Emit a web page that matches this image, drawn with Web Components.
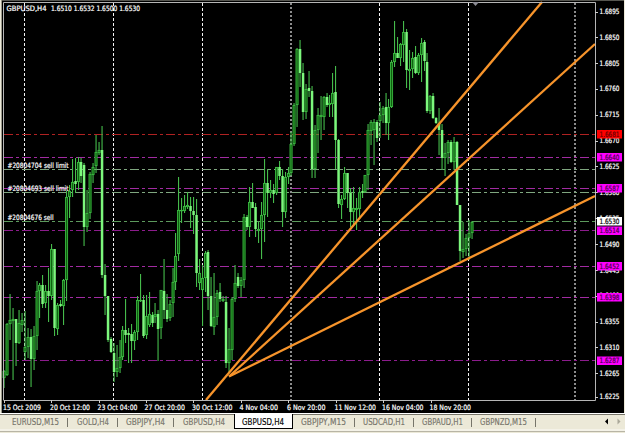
<!DOCTYPE html>
<html lang="en">
<head>
<meta charset="utf-8">
<title>GBPUSD,H4</title>
<style>
  html, body { margin: 0; height: 100%; overflow: hidden; background: #ece9d8; }
</style>
</head>
<body>
<chart-window>
  <price-chart symbol="GBPUSD,H4" quote="1.6510 1.6532 1.6500 1.6530"></price-chart>
  <tab-bar slot="tabs">
    <chart-tab start="12" width="47">EURUSD,M15</chart-tab>
    <chart-tab start="77" width="32">GOLD,H4</chart-tab>
    <chart-tab start="126" width="39">GBPJPY,H4</chart-tab>
    <chart-tab start="183" width="42" last>GBPUSD,H4</chart-tab>
    <chart-tab start="242" width="42" active>GBPUSD,H4</chart-tab>
    <chart-tab start="301" width="45">GBPJPY,M15</chart-tab>
    <chart-tab start="363" width="42">USDCAD,H1</chart-tab>
    <chart-tab start="422" width="41">GBPAUD,H1</chart-tab>
    <chart-tab start="480" width="47">GBPNZD,M15</chart-tab>
  </tab-bar>
</chart-window>

<script>
class ChartWindow extends HTMLElement {
  connectedCallback() {
    this.attachShadow({ mode: 'open' });
    this.shadowRoot.innerHTML = `
      <style>
        :host {
          display: flex;
          flex-direction: column;
          width: 625px;
          height: 433px;
          background: #ece9d8;
        }
        .view { flex: 0 0 413px; }
      </style>
      <div class="view"><slot></slot></div>
      <slot name="tabs"></slot>
    `;
  }
}
customElements.define('chart-window', ChartWindow);

// [x, high, low, body top, body bottom, falling]
const CANDLES = [
  [4,370,388,371,378,0],[7,323,376,324,375,0],[10,294,340,320,324,0],[13,308,380,319,321,0],
  [16,319,366,319,343,1],[19,310,344,323,343,0],[22,313,332,320,325,0],[25,311,360,347,352,0],
  [28,328,358,337,347,0],[31,329,387,337,359,1],[34,326,370,336,359,0],[37,281,350,291,336,0],
  [39.5,283,318,285,291,0],[42.5,275,308,285,304,1],[45.5,285,308,291,303,0],[48.5,268,322,291,296,1],
  [51.5,244,300,249,296,0],[54.5,249,336,249,328,1],[57.5,303,335,305,329,0],[60.5,300,307,304,306,1],
  [63.5,279,325,280,306,0],[66.5,191,301,197,280,0],[69.5,185,218,191,197,0],[72.5,159,197,182,190,0],
  [75.5,158,193,181,184,1],[78.5,157,190,162,182,0],[81,158,183,162,176,1],[84,163,246,165,227,1],
  [87,190,232,213,227,0],[90,172,219,174,213,0],[93,163,183,167,175,0],[96,135,173,152,166,0],
  [99,142,155,150,153,0],[102,126,278,150,275,1],[105,264,315,275,296,1],[108,296,342,296,340,1],
  [111,337,353,339,352,1],[114,343,382,353,372,1],[117,345,377,368,372,0],[120,340,373,357,368,0],
  [122.5,326,360,330,357,0],[125.5,299,343,330,335,1],[128.5,328,363,333,335,1],[131.5,324,363,334,341,1],
  [134.5,330,350,332,341,0],[137.5,296,340,300,332,0],[140.5,274,302,300,301,0],[143.5,295,338,300,336,1],
  [146.5,295,339,316,335,0],[149.5,292,327,314,325,0],[152.5,312,327,315,323,1],[155,303,323,314,317,0],
  [158,310,361,314,329,1],[161,290,339,290,328,0],[164,259,319,291,310,1],[167,294,322,310,319,1],
  [170,300,321,304,318,0],[173,268,317,282,303,0],[175.5,233,290,256,282,0],[178.5,177,261,210,254,0],
  [181.5,198,223,210,211,0],[184.5,195,213,206,211,0],[187.5,192,209,205,207,0],[190.5,197,228,206,211,1],
  [193.5,197,234,211,215,1],[196.5,199,287,215,273,1],[199.5,259,290,273,283,0],[202.5,265,326,278,290,0],
  [205.5,251,292,253,278,0],[208,250,310,252,296,1],[211,277,327,296,326,1],[214,273,335,317,327,0],
  [217,290,325,293,317,0],[220,283,302,292,299,1],[223,296,302,299,301,0],[226,296,368,302,363,1],
  [229,328,372,349,363,0],[232,297,360,299,350,0],[235,265,302,283,299,0],[238,273,288,277,286,1],
  [241,277,297,280,286,0],[244,214,288,217,280,0],[247,215,230,217,227,1],[249.5,187,237,202,227,0],
  [252.5,183,208,202,208,1],[255.5,203,237,207,229,1],[258.5,222,243,229,231,0],[261.5,202,259,215,229,0],
  [264.5,159,242,183,215,0],[267.5,169,217,183,193,1],[270.5,180,198,190,193,0],[273.5,184,203,190,194,1],
  [276.5,167,195,167,193,0],[279.5,161,180,167,176,1],[282.5,169,227,176,212,1],[285.5,172,218,177,212,0],
  [288.5,167,184,173,177,0],[291,132,176,144,173,0],[294,103,146,105,144,0],[297,48,127,49,105,0],
  [300,40,87,49,73,1],[303,63,120,73,112,1],[306,84,119,89,112,0],[309,71,97,88,91,1],
  [312,86,178,91,169,1],[315,125,178,130,169,0],[318,108,153,115,130,0],[321,96,140,115,117,0],
  [324,96,130,97,117,0],[327,93,107,97,105,1],[329.5,95,117,103,105,0],[332.5,73,117,93,104,0],
  [335.5,66,169,92,140,1],[338.5,139,208,140,204,1],[341.5,195,219,199,205,0],[344.5,167,200,173,199,0],
  [347.5,173,208,173,193,1],[350.5,188,227,193,212,1],[353.5,187,225,208,212,0],[356.5,198,230,208,210,0],
  [359.5,187,218,192,209,0],[362.5,184,198,191,193,1],[365,175,193,175,192,0],[368,124,190,130,175,0],
  [371,120,145,122,131,0],[374,119,165,122,130,0],[377,120,142,122,138,1],[380,102,138,115,121,0],
  [383,106,123,108,115,0],[386,93,135,107,123,1],[388.5,99,140,107,123,0],[391.5,60,108,62,107,0],
  [394.5,21,67,53,62,0],[397.5,37,58,53,58,1],[400.5,43,66,44,58,0],[403.5,21,62,32,45,0],
  [406.5,29,88,32,70,1],[409.5,50,90,69,71,0],[412.5,52,78,58,69,0],[415.5,46,74,57,73,1],
  [418.5,53,75,55,73,0],[421.5,38,82,43,55,0],[424.5,40,71,42,61,1],[427,53,113,62,111,1],
  [430,95,114,96,111,0],[433,93,119,96,118,1],[436,117,124,118,123,1],[439,108,155,123,130,1],
  [442,124,170,130,158,1],[445,143,176,153,158,0],[448,140,164,142,153,0],[451,140,163,142,162,1],
  [454,137,170,142,162,0],[457,141,205,142,205,1],[460,205,261,205,251,1],[463,222,258,249,252,0],
  [466,234,256,238,249,0],[469,220,260,233,238,0],[472,221,239,222,233,0]
];

const LEVELS = [
  [134.5, '#b02222'], [157.5, '#a22ba2'], [188.5, '#a22ba2'], [230.5, '#8c1c8c'],
  [266.5, '#a22ba2'], [297.5, '#a22ba2'], [360.5, '#8c1c8c'],
  [169.5, '#7fa67f'], [192.5, '#7fa67f'], [221.5, '#5c9a5c']
];

const PRICES = [
  ['1.6895', 11.5], ['1.6850', 37], ['1.6805', 63], ['1.6760', 88.5], ['1.6715', 114.5],
  ['1.6670', 140.5], ['1.6625', 166], ['1.6580', 192], ['1.6535', 218], ['1.6490', 244],
  ['1.6445', 270], ['1.6400', 295.5], ['1.6355', 321.5], ['1.6310', 347], ['1.6265', 373], ['1.6225', 396.5]
];

const MARKS = [
  ['1.6681', 134, '#f00', '#600'], ['1.6640', 157, '#f0f', '#404'], ['1.6587', 188, '#f0f', '#404'],
  ['1.6514', 230.5, '#f0f', '#404'], ['1.6452', 266, '#f0f', '#404'], ['1.6398', 297, '#f0f', '#404'],
  ['1.6287', 360.5, '#f0f', '#404'], ['1.6530', 221, '#fff', '#000']
];

const TIMES = [
  ['15 Oct 2009', 3, 38], ['20 Oct 12:00', 50, 40], ['23 Oct 04:00', 97.5, 40], ['27 Oct 20:00', 144.5, 40.5],
  ['30 Oct 12:00', 192, 40.5], ['4 Nov 04:00', 239.5, 38.5], ['6 Nov 20:00', 287, 38.5],
  ['11 Nov 12:00', 334.5, 41.5], ['16 Nov 04:00', 382, 41.5], ['18 Nov 20:00', 429.5, 41.5]
];

const ORDERS = [
  ['#20804704 sell limit', 165, 61], ['#20804693 sell limit', 188, 61], ['#20804676 sell', 217, 46]
];

class PriceChart extends HTMLElement {
  connectedCallback() {
    this.attachShadow({ mode: 'open' });
    const label = (text, x, y, width, fill = '#fff') =>
      `<text x="${x}" y="${y + 2.7}" textLength="${width}" lengthAdjust="spacingAndGlyphs" fill="${fill}" stroke="${fill}">${text}</text>`;

    const days = [24.5, 113.5, 202.5, 291, 379.5, 468.5, 575].map(x => {
      const soft = x === 291 || x === 575;
      return `<line x1="${x}" x2="${x}" y1="3" y2="400" stroke="${soft ? '#8c8c8c' : '#f4f4f4'}" stroke-width="${soft ? 2 : 1}" stroke-dasharray="${soft ? '2 2' : '3 2'}"/>`;
    }).join('');

    const levels = LEVELS.map(([y, color]) =>
      `<line x1="4" x2="595" y1="${y}" y2="${y}" stroke="${color}" stroke-dasharray="9 3 3 3"/>`).join('');

    const candles = CANDLES.map(([x, high, low, top, bottom, down]) => {
      const h = Math.max(bottom - top, 1);
      return `<rect x="${x - 0.5}" y="${high}" width="1.1" height="${low - high}" fill="#45bb4b"/>` + (down
        ? `<rect x="${x - 1.2}" y="${top}" width="2.5" height="${h}" fill="#7cf77c"/>`
        : `<rect x="${x - 1}" y="${top + 0.4}" width="2.1" height="${Math.max(h - 0.8, 0.4)}" fill="#0f620f" stroke="#3ab840" stroke-width="0.9"/>`);
    }).join('');

    const scale = PRICES.map(([text, y]) =>
      `<path d="M595 ${Math.round(y) + 0.5}h3" stroke="#ccc"/>` + label(text, 599.5, y, 20)).join('');
    const marks = MARKS.map(([text, y, back, ink]) =>
      `<rect x="597" y="${y - 4}" width="25" height="8.5" fill="${back}"/>` + label(text, 599.5, y, 20, ink)).join('');
    const times = TIMES.map(([text, x, width]) =>
      `<path d="M${Math.round(x) + 1.5} 400v3" stroke="#ccc"/>` + label(text, x, 407, width)).join('');
    const orders = ORDERS.map(([text, y, width]) => label(text, 7.5, y, width)).join('');

    this.shadowRoot.innerHTML = `
      <style>
        :host { display: block; height: 413px; }
        svg { display: block; }
        text {
          font: 7.3px "DejaVu Sans Condensed", "DejaVu Sans", sans-serif;
          stroke-width: 0.2px;
          white-space: pre;
        }
      </style>
      <svg width="625" height="413" viewBox="0 0 625 413">
        <rect width="625" height="413" fill="#ece9d8"/>
        <rect x="1" width="1" height="413" fill="#9c9a8c"/>
        <rect x="2" width="622" height="413" fill="#000"/>
        <rect x="2" width="622" height="1" fill="#55554f"/>
        ${days}
        ${levels}
        ${candles}
        <g stroke="#f7942b" stroke-width="2.3">
          <path d="M206 400L542 2"/>
          <path d="M229 376.5L595 44"/>
          <path d="M229 376.5L595 196"/>
        </g>
        <path d="M3.5 400V2.5H595.5V400.5H3.5" fill="none" stroke="#b5b5b5"/>
        <path d="M472 2h7l-3.5 4z" fill="#8c8c94"/>
        ${scale}
        ${marks}
        ${times}
        ${orders}
        ${label(this.getAttribute('symbol'), 6.5, 8, 40)}
        ${label(this.getAttribute('quote'), 51, 8, 89)}
      </svg>
    `;
  }
}
customElements.define('price-chart', PriceChart);

class TabBar extends HTMLElement {
  connectedCallback() {
    this.attachShadow({ mode: 'open' });
    this.shadowRoot.innerHTML = `
      <style>
        :host {
          display: flex;
          flex: 1;
          background: linear-gradient(#fff 0 1px, #77756a 1px 2px, #ece9d8 2px 16px, #f4f2e8 16px 18px, #b8b5a5 18px 19px, #ece9d8 19px);
        }
        .tabs { display: flex; flex: 1; height: 15px; margin-top: 1px; }
        svg { width: 30px; height: 15px; margin: 1px 2px 0 0; }
      </style>
      <div class="tabs"><slot></slot></div>
      <svg viewBox="0 0 30 15">
        <path d="M15 4.5v6l-3-3z" fill="#000"/>
        <path d="M24.5 4.5v6l3-3z" fill="#aaa899"/>
      </svg>
    `;
  }
}
customElements.define('tab-bar', TabBar);

class ChartTab extends HTMLElement {
  connectedCallback() {
    const width = Number(this.getAttribute('width'));
    const start = Number(this.getAttribute('start'));
    const next = this.nextElementSibling;
    // each tab reaches halfway to its neighbours' labels
    const prev = this.previousElementSibling;
    const left = prev ? (Number(prev.getAttribute('start')) + Number(prev.getAttribute('width')) + start) / 2 : 0;
    const right = next ? (start + width + Number(next.getAttribute('start'))) / 2 : start + width + 9;
    this.attachShadow({ mode: 'open' });
    this.shadowRoot.innerHTML = `
      <style>
        :host {
          display: block;
          box-sizing: border-box;
          flex: none;
          width: ${right - left}px;
          padding-left: ${start - left}px;
          color: #77756b;
          background: linear-gradient(#77756a, #77756a) right 0 top 4px / 1px 9px no-repeat;
        }
        :host([last]) { background: none; }
        :host([active]) {
          color: #000;
          background: #fff;
          box-shadow: inset 1px 0 #000, inset -1px -1px #000;
        }
        svg { display: block; overflow: visible; }
        text {
          font: 8.7px "DejaVu Sans Condensed", "DejaVu Sans", sans-serif;
          fill: currentColor;
          stroke: currentColor;
          stroke-width: 0.15px;
        }
      </style>
      <svg width="${width}" height="15">
        <text x="0" y="10.5" textLength="${width}" lengthAdjust="spacingAndGlyphs">${this.textContent}</text>
      </svg>
    `;
  }
}
customElements.define('chart-tab', ChartTab);
</script>
</body>
</html>
